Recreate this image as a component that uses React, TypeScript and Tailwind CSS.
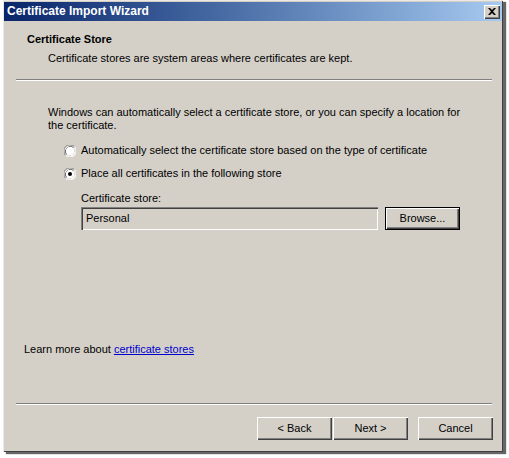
import React from "react";

const FONT = "font-['Liberation_Sans',Arial,sans-serif]";

function Radio({ checked }: { checked?: boolean }) {
  return (
    <svg width="12" height="12" viewBox="0 0 12 12" className="shrink-0">
      <circle cx="6" cy="6" r="5.5" fill="#ffffff" />
      <path d="M1.6 10.4 A6 6 0 0 1 10.4 1.6" transform="translate(0,0)" stroke="#808080" strokeWidth="1" fill="none" />
      <path d="M2.5 9.5 A5 5 0 0 1 9.5 2.5" stroke="#404040" strokeWidth="1" fill="none" />
      <path d="M10.4 1.6 A6 6 0 0 1 1.6 10.4" stroke="#ffffff" strokeWidth="1" fill="none" />
      <path d="M9.5 2.5 A5 5 0 0 1 2.5 9.5" stroke="#d4d0c8" strokeWidth="1" fill="none" />
      <circle cx="6" cy="6" r="4.2" fill="#ffffff" />
      {checked && <circle cx="6" cy="6" r="2" fill="#000000" />}
    </svg>
  );
}

function Button({ label, focused }: { label: string; focused?: boolean }) {
  return (
    <div
      className={
        focused
          ? "w-[75px] h-[23px] flex items-center justify-center bg-[#d4d0c8] border border-black shadow-[inset_1px_1px_0_#ffffff,inset_-1px_-1px_0_#404040,inset_-2px_-2px_0_#808080] text-[11px] leading-[13px] text-black"
          : "w-[75px] h-[23px] flex items-center justify-center bg-[#d4d0c8] shadow-[inset_1px_1px_0_#ffffff,inset_-1px_-1px_0_#404040,inset_-2px_-2px_0_#808080] text-[11px] leading-[13px] text-black"
      }
    >
      {label}
    </div>
  );
}

function Separator({ className }: { className: string }) {
  return <div className={"h-[2px] border-t border-[#808080] border-b border-b-white " + className} />;
}

export default function App() {
  return (
    <div className={"w-[509px] h-[458px] bg-white overflow-hidden " + FONT}>
      <div className="ml-[3px] w-[500px] h-[452px] flex flex-col bg-[#d4d0c8] shadow-[inset_1px_1px_0_#ece9e4,inset_-1px_-1px_0_#404040,3px_2px_1px_rgba(0,0,0,0.6)] text-[11px] leading-[13px] text-black">
        {/* Title bar */}
        <div className="mx-[1px] mt-[2px] h-[19px] flex items-center justify-between pl-[3px] pr-[2px] bg-gradient-to-r from-[#0a246a] to-[#a6caf0]">
          <span className="text-white font-bold text-[12px]">Certificate Import Wizard</span>
          <div className="w-[16px] h-[14px] bg-[#d4d0c8] flex items-center justify-center shadow-[inset_1px_1px_0_#ffffff,inset_-1px_-1px_0_#404040,inset_-2px_-2px_0_#808080]">
            <svg width="8" height="7" viewBox="0 0 8 7" className="-mt-px">
              <path d="M0 0h2l2 2 2-2h2L5 3.5 8 7H6L4 5 2 7H0l3-3.5z" fill="#000" />
            </svg>
          </div>
        </div>

        {/* Header */}
        <div className="ml-[24px] mt-[12px] font-bold">Certificate Store</div>
        <div className="ml-[45px] mt-[6px]">Certificate stores are system areas where certificates are kept.</div>
        <Separator className="ml-[13px] w-[476px] mt-[14px]" />

        {/* Body */}
        <div className="ml-[45px] mt-[25px] w-[420px]">
          Windows can automatically select a certificate store, or you can specify a location for the certificate.
        </div>
        <div className="ml-[61px] mt-[12px] flex items-center gap-[5px]">
          <Radio />
          <span>Automatically select the certificate store based on the type of certificate</span>
        </div>
        <div className="ml-[61px] mt-[10px] flex items-center gap-[5px]">
          <Radio checked />
          <span>Place all certificates in the following store</span>
        </div>
        <div className="ml-[78px] mt-[12px]">Certificate store:</div>
        <div className="ml-[78px] mt-[2px] flex items-center gap-[7px]">
          <div className="w-[297px] h-[23px] flex items-center pl-[5px] bg-[#d4d0c8] shadow-[inset_1px_1px_0_#808080,inset_2px_2px_0_#404040,inset_-1px_-1px_0_#ffffff,inset_-2px_-2px_0_#d4d0c8]">
            Personal
          </div>
          <Button label="Browse..." focused />
        </div>

        <div className="ml-[21px] mt-[113px]">
          Learn more about <span className="text-[#0000cc] underline">certificate stores</span>
        </div>

        <Separator className="ml-[13px] w-[476px] mt-[47px]" />

        <div className="mt-[12px] ml-[254px] flex">
          <Button label="< Back" />
          <div className="ml-px">
            <Button label="Next >" />
          </div>
          <div className="ml-[10px]">
            <Button label="Cancel" />
          </div>
        </div>
      </div>
    </div>
  );
}
